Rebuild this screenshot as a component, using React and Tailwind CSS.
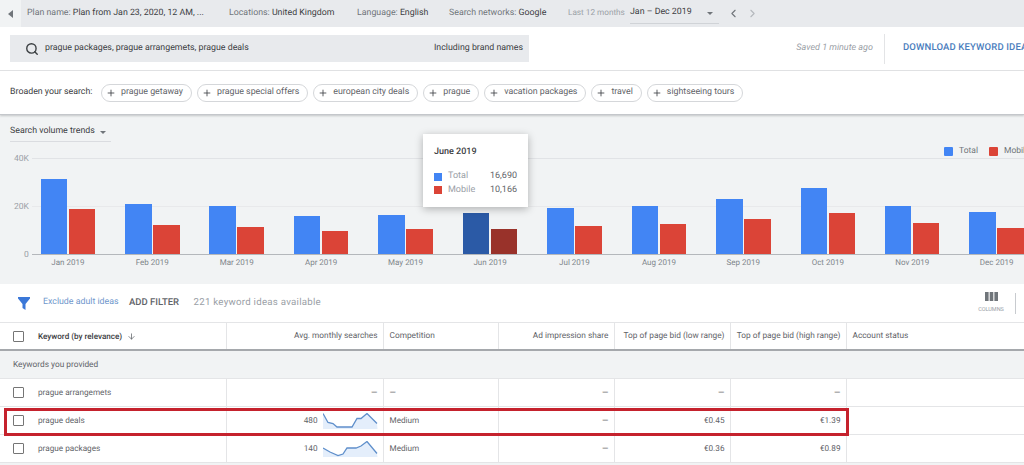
import React from "react";
import { Search, Plus, ChevronLeft, ChevronRight, ArrowDown } from "lucide-react";

const months = [
  ["Jan 2019", 75.5, 45], ["Feb 2019", 49.7, 28.7], ["Mar 2019", 47.7, 27.3], ["Apr 2019", 38.3, 22.7],
  ["May 2019", 39.3, 24.7], ["Jun 2019", 40.7, 25.3], ["Jul 2019", 46, 28], ["Aug 2019", 48.3, 30],
  ["Sep 2019", 55, 34.7], ["Oct 2019", 66, 40.7], ["Nov 2019", 48.3, 30.7], ["Dec 2019", 41.7, 26],
];
const chips = ["prague getaway", "prague special offers", "european city deals", "prague", "vacation packages", "travel", "sightseeing tours"];

const Caret = ({ className = "" }) => <span className={"inline-block w-0 h-0 border-x-[3.5px] border-x-transparent border-t-[3.5px] border-t-[#70757a] " + className} />;
const Check = () => <span className="block w-[11px] h-[11px] border-[1.5px] border-[#757575] rounded-[1px] bg-white" />;
const Dash = () => <span className="text-[#3c4043]">—</span>;

function Spark({ line, baseY = 16 }) {
  return (
    <svg width="55" height="16" viewBox="0 0 55 16" className="shrink-0">
      <polygon points={`${line} 54.5,${baseY} 0,${baseY}`} fill="#e4eefb" />
      <polyline points={line} fill="none" stroke="#5f8fcb" strokeWidth="1.3" />
    </svg>
  );
}

function Row({ kw, searches, spark, comp, low, high }) {
  const cell = "flex items-center border-r border-[#e4e5e7] pl-[5.5px] pr-[5.5px]";
  return (
    <div className="grid grid-cols-[227px_157px_115px_116px_116px_116px_1fr] h-[28px] border-b border-[#e4e5e7] bg-white text-[8.2px] text-[#5f6368]">
      <div className={cell + " pl-[13px]"}><Check /><span className="ml-[14px] pt-[1px]">{kw}</span></div>
      <div className={cell + " justify-end gap-[5px]"}><span className="pt-[1px]">{searches}</span>{spark}</div>
      <div className={cell + " pt-[1px]"}>{comp}</div>
      <div className={cell + " justify-end pt-[1px]"}><Dash /></div>
      <div className={cell + " justify-end pt-[1px]"}>{low}</div>
      <div className={cell + " justify-end pt-[1px]"}>{high}</div>
      <div />
    </div>
  );
}

export default function App() {
  return (
    <div className="relative w-[1024px] h-[465px] overflow-hidden bg-white font-['Roboto',sans-serif] text-[#3c4043] [text-rendering:geometricPrecision]">
      {/* top bar */}
      <div className="flex items-center h-[27px] bg-[#e8eaed] text-[8.8px] whitespace-nowrap">
        <div className="flex items-center justify-center w-[21px] h-full bg-[#f1f3f4] mr-[6px]">
          <span className="w-0 h-0 border-y-[4px] border-y-transparent border-r-[5px] border-r-[#70757a]" />
        </div>
        <div className="w-[202px]"><span className="text-[#70757a]">Plan name: </span>Plan from Jan 23, 2020, 12 AM, ...</div>
        <div className="w-[128px]"><span className="text-[#70757a]">Locations: </span>United Kingdom</div>
        <div className="w-[92px]"><span className="text-[#70757a]">Language: </span>English</div>
        <div className="w-[119px]"><span className="text-[#70757a]">Search networks: </span>Google</div>
        <div className="w-[62px] text-[#9aa0a6] text-[8.2px]">Last 12 months</div>
        <div className="flex items-center justify-between w-[89px] h-[20px] border-b border-[#d0d3d7] pr-[6px]">
          <span>Jan – Dec 2019</span><Caret />
        </div>
        <ChevronLeft size={13} className="ml-[8px] text-[#70757a]" />
        <ChevronRight size={13} className="ml-[6px] text-[#b4b8bd]" />
      </div>

      {/* search row */}
      <div className="flex items-center h-[44px] border-b border-[#e3e4e6] pl-[10px] whitespace-nowrap">
        <div className="flex items-center justify-between w-[519px] h-[27px] bg-[#e8eaed] pl-[15px] pr-[6px] text-[8.8px] shrink-0">
          <div className="flex items-center gap-[6px]">
            <Search size={14} strokeWidth={2.4} className="text-[#3c4043]" />
            <span className="pt-[1px]">prague packages, prague arrangemets, prague deals</span>
          </div>
          <span className="pt-[1px]">Including brand names</span>
        </div>
        <div className="w-[344px] shrink-0 text-right italic text-[9px] text-[#9aa0a6]">Saved 1 minute ago</div>
        <div className="w-px h-[30px] ml-[11px] bg-[#e3e4e6] shrink-0" />
        <div className="ml-[18px] text-[9.5px] font-medium text-[#4a7dbd] tracking-[0.15px]">DOWNLOAD KEYWORD IDEAS</div>
      </div>

      {/* broaden row */}
      <div className="relative z-10 flex items-center h-[44px] pl-[10px] border-b border-[#c4c7cb] shadow-[0_1px_2px_rgba(60,64,67,0.25)] bg-white text-[8.8px] whitespace-nowrap">
        <span className="w-[91px] pt-[1px]">Broaden your search:</span>
        <div className="flex gap-[5px]">
          {chips.map((c) => (
            <div key={c} className="flex items-center h-[18px] pl-[3px] pr-[8px] border border-[#d5d7da] rounded-full text-[8.8px] text-[#5f6368]">
              <Plus size={10} strokeWidth={2} className="mr-[5px] ml-[1px] text-[#3c4043]" /><span className="pt-[1px]">{c}</span>
            </div>
          ))}
        </div>
      </div>

      {/* chart */}
      <div className="relative h-[169px] bg-[#f1f3f4] overflow-hidden whitespace-nowrap">
        <div className="flex items-center w-[101px] h-[27px] ml-[10px] border-b border-[#dadce0] text-[8.8px] pt-[8px]">
          <span>Search volume trends</span><Caret className="ml-[5px]" />
        </div>
        <div className="flex items-center gap-[6px] absolute top-[30px] left-[944px] text-[8.5px] text-[#70757a]">
          <span className="w-[9px] h-[9px] bg-[#4285f4] rounded-[1px]" /><span className="mr-[5px]">Total</span>
          <span className="w-[9px] h-[9px] bg-[#db4437] rounded-[1px]" /><span>Mobile</span>
        </div>
        <div className="relative ml-[32px] mt-[16px] h-[97px] border-b border-[#b4b7bb]">
          <div className="absolute inset-x-0 top-0 h-px bg-[#e1e3e6]" />
          <div className="absolute inset-x-0 top-[48px] h-px bg-[#e8e9eb]" />
          <span className="absolute -left-[18px] -top-[5px] text-[8.5px] text-[#9aa0a6]">40K</span>
          <span className="absolute -left-[18px] top-[43px] text-[8.5px] text-[#9aa0a6]">20K</span>
          <span className="absolute -left-[8px] top-[91px] text-[8.5px] text-[#9aa0a6]">0</span>
          <div className="relative flex items-end h-full pl-[8.6px]">
            {months.map(([m, a, b], i) => (
              <div key={m} className="flex items-end gap-[1.5px] w-[84.45px] shrink-0">
                <div className={"w-[26.5px] " + (i === 5 ? "bg-[#2b5aa6]" : "bg-[#4285f4]")} style={{ height: a }} />
                <div className={"w-[26.5px] " + (i === 5 ? "bg-[#99322a]" : "bg-[#db4437]")} style={{ height: b }} />
              </div>
            ))}
          </div>
        </div>
        <div className="flex pl-[40.6px] mt-[2px]">
          {months.map(([m]) => (
            <div key={m} className="w-[84.45px] shrink-0"><div className="w-[54.5px] text-center text-[8px] text-[#80868b]">{m}</div></div>
          ))}
        </div>
      </div>

      {/* tooltip */}
      <div className="absolute left-[423px] top-[134px] w-[105px] h-[73px] bg-white shadow-[0_2px_8px_rgba(0,0,0,0.28)] pt-[12px] px-[11px] text-[9px]">
        <div className="font-medium text-[#3c4043] mb-[11px] leading-[13px]">June 2019</div>
        <div className="flex items-center h-[13.5px]">
          <span className="w-[8px] h-[8px] bg-[#4285f4] mr-[6px]" /><span className="text-[#9aa0a6]">Total</span><span className="ml-auto text-[#5f6368]">16,690</span>
        </div>
        <div className="flex items-center h-[13.5px]">
          <span className="w-[8px] h-[8px] bg-[#db4437] mr-[6px]" /><span className="text-[#9aa0a6]">Mobile</span><span className="ml-auto text-[#5f6368]">10,166</span>
        </div>
      </div>

      {/* filter row */}
      <div className="flex items-center h-[38px] pl-[18px] bg-white whitespace-nowrap">
        <svg width="12" height="13" viewBox="0 0 12 13" className="shrink-0"><path d="M0 0h12v1.6L7.5 7v6L4.5 11V7L0 1.6z" fill="#3b78d8" /></svg>
        <span className="w-[86px] ml-[13px] text-[8.8px] text-[#6f97cc]">Exclude adult ideas</span>
        <span className="w-[64.5px] text-[9.5px] pt-[1px] font-medium text-[#5f6368]">ADD FILTER</span>
        <span className="text-[9.7px] pt-[1px] tracking-[0.25px] text-[#9aa0a6]">221 keyword ideas available</span>
        <div className="ml-auto flex flex-col items-center w-[30px] mr-[9px]">
          <svg width="13" height="9" viewBox="0 0 13 9"><path d="M0 0h3.6v9H0zM4.7 0h3.6v9H4.7zM9.4 0H13v9H9.4z" fill="#70757a" /></svg>
          <span className="mt-[5px] text-[5.5px] text-[#9aa0a6] leading-[8px]">COLUMNS</span>
        </div>
        <div className="w-px h-[21px] bg-[#c8cbcf]" />
        <div className="w-[8px]" />
      </div>

      {/* table */}
      <div className="grid grid-cols-[227px_157px_115px_116px_116px_116px_1fr] h-[29px] border-y border-t-[#e4e5e7] border-b-[#a5a8ac] border-b-2 bg-white text-[8.3px] text-[#5f6368] whitespace-nowrap">
        <div className="flex items-center border-r border-[#e4e5e7] pl-[13px]">
          <Check /><span className="ml-[14px] pt-[1px] text-[8.1px] font-medium text-[#3c4043]">Keyword (by relevance)</span><ArrowDown size={9} className="ml-[5px]" />
        </div>
        <div className="flex items-center justify-end border-r border-[#e4e5e7] pt-[1px] px-[5.5px]">Avg. monthly searches</div>
        <div className="flex items-center border-r border-[#e4e5e7] pt-[1px] px-[5.5px]">Competition</div>
        <div className="flex items-center justify-end border-r border-[#e4e5e7] pt-[1px] px-[5.5px]">Ad impression share</div>
        <div className="flex items-center justify-end border-r border-[#e4e5e7] pt-[1px] px-[5.5px]">Top of page bid (low range)</div>
        <div className="flex items-center justify-end border-r border-[#e4e5e7] pt-[1px] px-[5.5px]">Top of page bid (high range)</div>
        <div className="flex items-center pt-[1px] px-[5.5px]">Account status</div>
      </div>
      <div className="flex items-center h-[28px] pl-[13px] pt-[1px] bg-[#f1f3f4] border-b border-[#e4e5e7] text-[8.3px] text-[#5f6368]">Keywords you provided</div>
      <Row kw="prague arrangemets" searches={<Dash />} comp={<Dash />} low={<Dash />} high={<Dash />} spark={null} />
      <Row kw="prague deals" searches="480" comp="Medium" low="€0.45" high="€1.39"
        spark={<Spark line="0,0.5 5,9.5 10,10.5 14,14 29,14 34,5.5 38,5.5 44,0.5 54,10.5" />} />
      <Row kw="prague packages" searches="140" comp="Medium" low="€0.36" high="€0.89"
        spark={<Spark line="0,7 7,11 15,14.5 20,13 24,7 33,7 38,5 44,0.5 54,12.5" />} />
      <div className="h-[4px] bg-[#f1f3f4]" />

      {/* highlight */}
      <div className="absolute left-[4px] top-[408px] w-[845px] h-[28px] border-[3px] border-[#c5222d]" />
    </div>
  );
}
